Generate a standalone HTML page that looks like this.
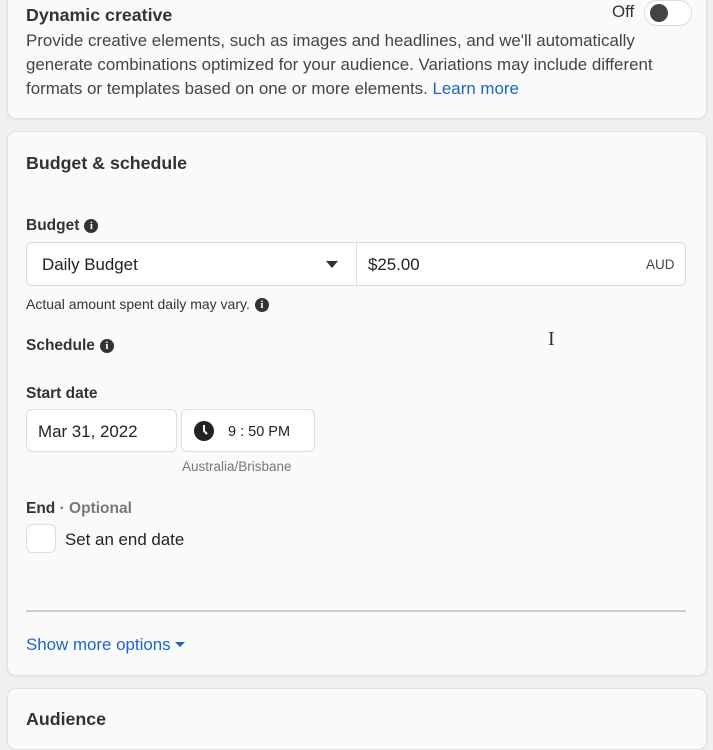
<!DOCTYPE html>
<html><head><style>
body{margin:0;width:713px;height:720px;background:#f0f0f0;font-family:"Liberation Sans",Arial,sans-serif;color:#1c1e21;position:relative;overflow:hidden}
.card{position:absolute;left:7px;width:698px;background:#fafafa;border:1px solid #e2e2e2;border-radius:9px;box-shadow:0 1px 2px rgba(0,0,0,.06)}
.a{position:absolute;white-space:nowrap}
.h{font-weight:bold;font-size:17.8px;color:#333}
.b{font-weight:bold;font-size:15.5px;color:#333}
.t{font-size:16.9px;color:#444}
.box{position:absolute;background:#fff;border:1px solid #ddd;border-radius:6px}
.i{display:inline-block;width:14px;height:14px;border-radius:50%;background:#333;color:#fff;font-size:11px;font-weight:bold;text-align:center;line-height:14px;font-family:"Liberation Serif",serif;vertical-align:1px;margin-left:5px}
</style></head><body>
<div class="card" style="top:-20px;height:137px"></div>
<div class="a h" style="left:26px;top:5px">Dynamic creative</div>
<div class="a t" style="left:26px;top:29px;line-height:24px">Provide creative elements, such as images and headlines, and we'll automatically<br>generate combinations optimized for your audience. Variations may include different<br>formats or templates based on one or more elements. <span style="color:#1a66c9">Learn more</span></div>
<div class="a t" style="left:612px;top:2px;color:#333">Off</div>
<div class="a" style="left:644px;top:0;width:46px;height:24px;border:1px solid #ddd;border-radius:13px;background:#fff"><div style="position:absolute;left:5px;top:3px;width:18px;height:18px;border-radius:50%;background:#444"></div></div>

<div class="card" style="top:131px;height:543px"></div>
<div class="a h" style="left:26px;top:153px">Budget &amp; schedule</div>
<div class="a b" style="left:26px;top:217px">Budget<span class="i">i</span></div>
<div class="box" style="left:26px;top:242px;width:658px;height:42px"></div>
<div class="a" style="left:356px;top:243px;width:1px;height:42px;background:#ddd"></div>
<div class="a t" style="left:42px;top:255px;color:#222">Daily Budget</div>
<div class="a" style="left:326px;top:261px;border-left:6px solid transparent;border-right:6px solid transparent;border-top:7px solid #333"></div>
<div class="a t" style="left:368px;top:255px;color:#222">$25.00</div>
<div class="a" style="left:646px;top:257px;font-size:13.5px;color:#444">AUD</div>
<div class="a" style="left:26px;top:296px;font-size:14px;color:#333">Actual amount spent daily may vary.<span class="i">i</span></div>
<div class="a b" style="left:26px;top:337px">Schedule<span class="i">i</span></div>
<div class="a" style="left:548px;top:328px;font-size:20px;color:#333;font-family:'Liberation Serif',serif">I</div>
<div class="a b" style="left:26px;top:385px">Start date</div>
<div class="box" style="left:26px;top:409px;width:149px;height:41px"></div>
<div class="a t" style="left:38px;top:422px;color:#222">Mar 31, 2022</div>
<div class="box" style="left:181px;top:409px;width:132px;height:41px"></div>
<svg class="a" style="left:194px;top:421px" width="20" height="20" viewBox="0 0 20 20"><circle cx="10" cy="10" r="10" fill="#222"/><path d="M10 4v6l3 3" stroke="#fff" stroke-width="2" fill="none"/></svg>
<div class="a" style="left:228px;top:424px;font-size:14.5px;color:#222">9 : 50 PM</div>
<div class="a" style="left:182px;top:459px;font-size:13.5px;color:#777">Australia/Brisbane</div>
<div class="a b" style="left:26px;top:500px">End <span style="color:#777">· Optional</span></div>
<div class="box" style="left:26px;top:524px;width:28px;height:27px"></div>
<div class="a t" style="left:65px;top:530px;color:#222">Set an end date</div>
<div class="a" style="left:26px;top:610px;width:660px;height:2px;background:#ccc"></div>
<div class="a t" style="left:26px;top:635px;color:#1a66c9">Show more options <span style="display:inline-block;border-left:5px solid transparent;border-right:5px solid transparent;border-top:5px solid #1a66c9;vertical-align:3px"></span></div>

<div class="card" style="top:688px;height:60px"></div>
<div class="a h" style="left:26px;top:709px">Audience</div>
</body></html>
